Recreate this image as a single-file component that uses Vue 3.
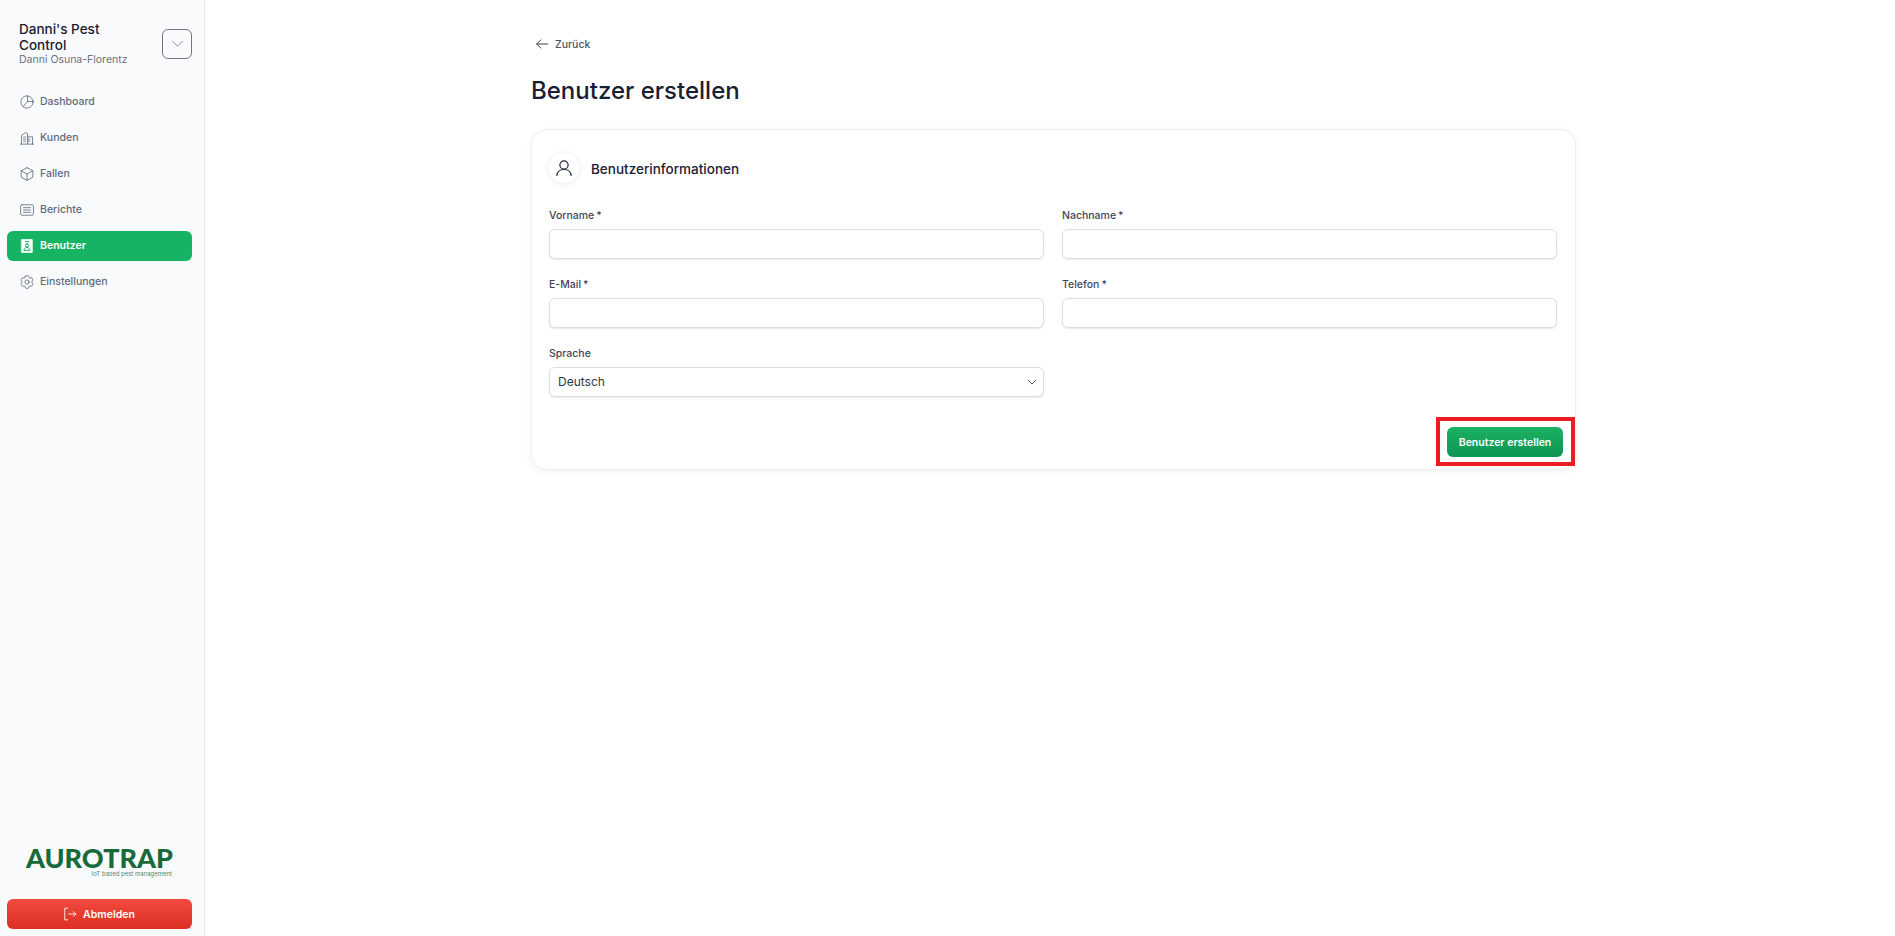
<script setup>
const nav = [
  { label: 'Dashboard', icon: 'chart' },
  { label: 'Kunden', icon: 'building' },
  { label: 'Fallen', icon: 'cube' },
  { label: 'Berichte', icon: 'list' },
  { label: 'Benutzer', icon: 'badge', active: true },
  { label: 'Einstellungen', icon: 'cog' },
]
</script>

<template>
  <div class="page">
    <aside class="sidebar">
      <div class="org">
        <div class="org-text">
          <div class="org-name">Danni's Pest Control</div>
          <div class="org-user">Danni Osuna-Florentz</div>
        </div>
        <button class="org-toggle" aria-label="Menü">
          <svg width="13" height="13" viewBox="0 0 24 24" fill="none" stroke="#6b7280" stroke-width="1.5" stroke-linecap="round" stroke-linejoin="round"><path d="M3 8l9 9 9-9" /></svg>
        </button>
      </div>

      <nav class="nav">
        <a v-for="item in nav" :key="item.label" class="nav-item" :class="{ active: item.active }">
          <svg class="nav-icon" viewBox="0 0 24 24" fill="none" stroke="currentColor" stroke-width="1.4" stroke-linecap="round" stroke-linejoin="round">
            <template v-if="item.icon === 'chart'">
              <circle cx="12" cy="12" r="10.5" />
              <path d="M13 1.7V11l-7.5 9M13 11h9.5" />
            </template>
            <template v-else-if="item.icon === 'building'">
              <path d="M.8 22.5h22.4M2.5 22.5V7.5L10 2.5l3 2v18M13 10h8.5v12.5M6 10.5h3.5M6 14h3.500M6 17.5h3.500M13 14h4M13 17.5h4" />
            </template>
            <template v-else-if="item.icon === 'cube'">
              <path d="M12 1.2l10 5.3v11L12 22.8 2 17.5v-11l10-5.3z" />
              <path d="M2 6.5L12 12l10-5.5M12 12v10.8" />
            </template>
            <template v-else-if="item.icon === 'list'">
              <rect x="1" y="3" width="22" height="18" rx="2.5" />
              <path d="M6 8h12M6 12h12M6 16h12" />
            </template>
            <template v-else-if="item.icon === 'badge'">
              <path fill="#fff" stroke="#fff" d="M3 1h18v22H3z" />
              <path stroke="#17b364" stroke-width="1.7" d="M9 4.5h6M12 8.2a2.8 2.8 0 1 0 0 5.6 2.8 2.8 0 0 0 0-5.600zM7.2 19.5c0-3 2-5 4.800-5s4.800 2 4.800 5M7.2 19.5h9.600" />
            </template>
            <g v-else transform="translate(12 12) scale(1.2) translate(-12 -12)" stroke-width="1.2">
              <path d="M9.594 3.94c.09-.542.56-.94 1.11-.94h2.593c.55 0 1.02.398 1.11.94l.213 1.281c.063.374.313.686.645.87.074.04.147.083.22.127.325.196.72.257 1.075.124l1.217-.456a1.125 1.125 0 0 1 1.37.49l1.296 2.247a1.125 1.125 0 0 1-.26 1.431l-1.003.827c-.293.241-.438.613-.43.992a7.723 7.723 0 0 1 0 .255c-.008.378.137.75.43.991l1.004.827c.424.35.534.955.26 1.43l-1.298 2.247a1.125 1.125 0 0 1-1.369.491l-1.217-.456c-.355-.133-.75-.072-1.076.124a6.47 6.47 0 0 1-.22.128c-.331.183-.581.495-.644.869l-.213 1.281c-.09.543-.56.94-1.11.94h-2.594c-.55 0-1.019-.398-1.11-.94l-.213-1.281c-.062-.374-.312-.686-.644-.87a6.52 6.52 0 0 1-.22-.127c-.325-.196-.72-.257-1.076-.124l-1.217.456a1.125 1.125 0 0 1-1.369-.49l-1.297-2.247a1.125 1.125 0 0 1 .26-1.431l1.004-.827c.292-.24.437-.613.43-.991a6.932 6.932 0 0 1 0-.255c.007-.38-.138-.751-.43-.992l-1.004-.827a1.125 1.125 0 0 1-.26-1.43l1.297-2.247a1.125 1.125 0 0 1 1.37-.491l1.216.456c.356.133.751.072 1.076-.124.072-.044.146-.086.22-.128.332-.183.582-.495.644-.869l.214-1.28z" />
              <circle cx="12" cy="12" r="3" />
            </g>
          </svg>
          <span>{{ item.label }}</span>
        </a>
      </nav>

      <div class="bottom">
        <div class="logo">
          <div class="logo-name">AUROTRAP</div>
          <div class="logo-tag">IoT based pest management</div>
        </div>
        <button class="logout">
          <svg width="14" height="14" viewBox="0 0 24 24" fill="none" stroke="currentColor" stroke-width="1.5" stroke-linecap="round" stroke-linejoin="round"><path d="M8 2H3v20h5M10 12h12M18 8l4 4-4 4" /></svg>
          <span>Abmelden</span>
        </button>
      </div>
    </aside>

    <main class="main">
      <div class="content">
        <a class="back">
          <svg width="14" height="14" viewBox="0 0 24 24" fill="none" stroke="#374151" stroke-width="1.7" stroke-linecap="round" stroke-linejoin="round"><path d="M22 12H3M10 5l-7 7 7 7" /></svg>
          <span>Zurück</span>
        </a>
        <h1 class="title">Benutzer erstellen</h1>

        <section class="card">
          <header class="card-head">
            <span class="head-icon">
              <svg width="18" height="18" viewBox="0 0 24 24" fill="none" stroke="#1f2937" stroke-width="1.6" stroke-linecap="round" stroke-linejoin="round"><circle cx="12" cy="8" r="5.5" /><path d="M2.5 22c.6-5 4-8 9.5-8s8.9 3 9.5 8" /></svg>
            </span>
            <h2>Benutzerinformationen</h2>
          </header>

          <div class="grid">
            <label class="field"><span class="lab">Vorname<i>*</i></span><input type="text" /></label>
            <label class="field"><span class="lab">Nachname<i>*</i></span><input type="text" /></label>
            <label class="field"><span class="lab">E-Mail<i>*</i></span><input type="text" /></label>
            <label class="field"><span class="lab">Telefon<i>*</i></span><input type="text" /></label>
            <div class="field">
              <span class="lab">Sprache</span>
              <div class="select">
                <span>Deutsch</span>
                <svg width="10" height="10" viewBox="0 0 24 24" fill="none" stroke="#374151" stroke-width="2.2" stroke-linecap="round" stroke-linejoin="round"><path d="M3 8l9 9 9-9" /></svg>
              </div>
            </div>
          </div>

          <div class="actions">
            <button class="submit">Benutzer erstellen</button>
          </div>
          <div class="highlight"></div>
        </section>
      </div>
    </main>
  </div>
</template>

<style>
html, body { margin: 0; background: #fff; }
</style>

<style scoped>
.page {
  display: flex;
  height: 936px;
  overflow: hidden;
  font-family: Inter, "Noto Sans", sans-serif;
  color: #1a2033;
  background: #fff;
}
.sidebar {
  width: 204px;
  flex: none;
  box-sizing: content-box;
  background: #f9fafc;
  border-right: 1px solid #e3e7ee;
  display: flex;
  flex-direction: column;
}
.org {
  display: flex;
  align-items: center;
  justify-content: space-between;
  padding: 20px 12px 0 19px;
  height: 47px;
}
.org-text { width: 112px; min-width: 0; }
.org-name {
  max-width: 92px;
  font-size: 13.5px;
  line-height: 16px;
  font-weight: 500;
  color: #1a2033;
}
.org-user {
  font-size: 10.5px;
  line-height: 14px;
  color: #6b7280;
  white-space: nowrap;
}
.org-toggle {
  width: 30px;
  height: 30px;
  flex: none;
  padding: 0;
  display: flex;
  align-items: center;
  justify-content: center;
  background: transparent;
  border: 1px solid #71757e;
  border-radius: 6px;
}
.nav {
  display: flex;
  flex-direction: column;
  gap: 6px;
  padding: 20px 12px 0 7px;
}
.nav-item {
  box-sizing: border-box;
  display: flex;
  align-items: center;
  gap: 6px;
  height: 30px;
  padding: 0 0 1px 13px;
  border-radius: 6px;
  font-size: 10.5px;
  font-weight: 500;
  color: #606a7c;
}
.nav-item.active {
  background: #17b364;
  color: #fff;
  font-weight: 600;
}
.nav-icon { width: 14px; height: 14px; flex: none; }
.bottom {
  margin-top: auto;
  padding: 0 12px 7px 7px;
}
.logo {
  width: 146px;
  margin: 0 0 22px 19px;
}
.logo-name {
  font-family: Lato, sans-serif;
  font-weight: 900;
  font-size: 27px;
  line-height: 23px;
  color: #176b3a;
  white-space: nowrap;
}
.logo-tag {
  margin-top: 1px;
  font-size: 6px;
  line-height: 7px;
  color: #4f8a67;
  text-align: right;
  white-space: nowrap;
}
.logout {
  width: 100%;
  height: 30px;
  display: flex;
  align-items: center;
  justify-content: center;
  gap: 6px;
  padding: 0 1px 0 0;
  border: 0;
  border-radius: 6px;
  background: linear-gradient(#f04a3e, #dd2f23);
  color: #fff;
  font: 600 10.5px Inter, sans-serif;
}
.main { flex: 1; min-width: 0; }
.content {
  width: 1045px;
  margin-left: 326px;
  padding-top: 37px;
}
.back {
  display: flex;
  align-items: center;
  gap: 6px;
  height: 14px;
  padding-left: 4px;
  font-size: 10.5px;
  font-weight: 500;
  color: #4b5563;
}
.title {
  margin: 22px 0 0;
  font-size: 24px;
  line-height: 36px;
  font-weight: 500;
  color: #1a2033;
}
.card {
  position: relative;
  box-sizing: border-box;
  margin-top: 20px;
  height: 341px;
  padding: 23px 18px 18px 17px;
  background: #fff;
  border: 1px solid #eff0f3;
  border-radius: 16px;
  box-shadow: 0 2px 8px rgba(17, 24, 39, .05);
}
.card-head {
  display: flex;
  align-items: center;
  gap: 12px;
  height: 30px;
}
.head-icon {
  width: 30px;
  height: 30px;
  display: flex;
  align-items: center;
  justify-content: center;
  border-radius: 50%;
  background: #fff;
  box-shadow: 0 1px 6px rgba(17, 24, 39, .09);
}
.card-head h2 {
  margin: 0;
  padding-top: 2px;
  font-size: 13.5px;
  font-weight: 500;
  color: #1a2033;
}
.grid {
  display: grid;
  grid-template-columns: 1fr 1fr;
  column-gap: 18px;
  row-gap: 19px;
  margin-top: 26px;
}
.field { display: flex; flex-direction: column; gap: 6px; }
.lab {
  font-size: 10.5px;
  line-height: 14px;
  font-weight: 500;
  color: #3d4656;
}
.lab i { font-style: normal; margin-left: 2px; color: #3d4656; }
input, .select {
  box-sizing: border-box;
  width: 100%;
  height: 30px;
  background: #fff;
  border: 1px solid #dddfe6;
  border-radius: 6px;
  box-shadow: 0 1px 2px rgba(17, 24, 39, .1);
  outline: none;
}
.select {
  display: flex;
  align-items: center;
  justify-content: space-between;
  padding: 0 6px 1px 8px;
  font-size: 12px;
  color: #2f3848;
}
.actions {
  position: absolute;
  right: 12px;
  bottom: 12px;
}
.submit {
  width: 116px;
  height: 30px;
  padding: 0;
  border: 0;
  border-radius: 6px;
  background: linear-gradient(#1bb163, #0f9554);
  color: #fff;
  font: 600 10.5px Inter, sans-serif;
}
.highlight {
  position: absolute;
  left: 904px;
  top: 287px;
  width: 139px;
  height: 49px;
  box-sizing: border-box;
  border: 4px solid #ec1c24;
  pointer-events: none;
}
</style>
